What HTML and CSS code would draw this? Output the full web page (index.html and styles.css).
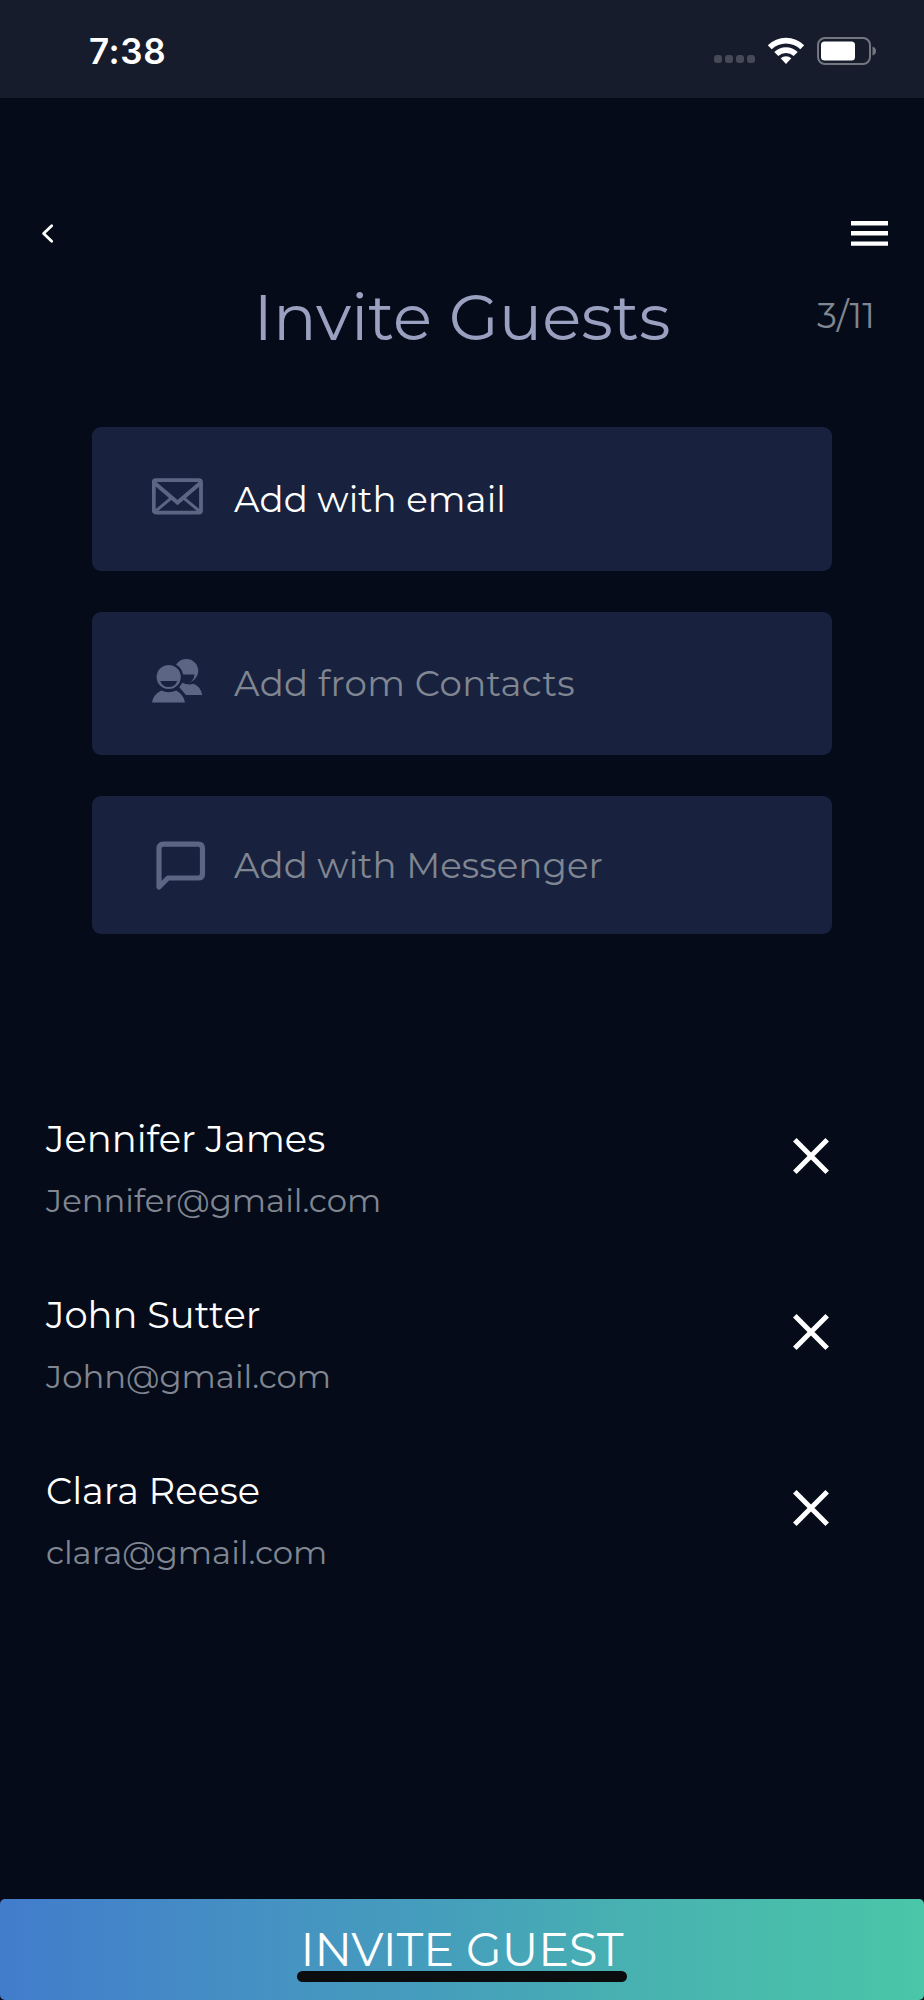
FILE: index.html
```
<!DOCTYPE html>
<html lang="en">
<head>
    <meta charset="UTF-8">
    <meta name="viewport" content="width=device-width, initial-scale=1.0">
    <title>Invite Guests</title>
    <link rel="stylesheet" href="styles.css">
</head>
<body>
    <div class="status-bar">
        <div class="time">7:38</div>
        <div class="status-icons">
            <div class="signal"><span></span><span></span><span></span><span></span></div>
            <svg class="wifi" width="38" height="28" viewBox="0 0 38 28" fill="#fff">
                <path d="M0.8 8.3A26 26 0 0 1 37.2 8.3L33.3 12.3A20.4 20.4 0 0 0 4.7 12.3Z"/>
                <path d="M7.3 15A16.8 16.8 0 0 1 30.7 15L26.7 19A11.2 11.2 0 0 0 11.3 19Z"/>
                <path d="M13.7 21.3A7.8 7.8 0 0 1 24.3 21.3L19 27Z"/>
            </svg>
            <svg class="battery" width="60" height="28" viewBox="0 0 60 28">
                <rect x="1" y="1" width="52" height="26" rx="7" fill="none" stroke="#73767f" stroke-width="2"/>
                <rect x="4" y="4.5" width="34" height="19" rx="3.5" fill="#fff"/>
                <path d="M55.5 9.5Q59 10.5 59 14T55.5 18.5Z" fill="#73767f"/>
            </svg>
        </div>
    </div>

    <header>
        <a href="#" class="back" aria-label="Back">
            <svg width="16" height="24" viewBox="0 0 16 24" fill="none" stroke="#fff" stroke-width="2.8" stroke-linecap="round" stroke-linejoin="round">
                <path d="M11.7 3.7L3.6 11.5L11.7 19.3"/>
            </svg>
        </a>
        <a href="#" class="menu" aria-label="Menu">
            <svg width="37" height="26" viewBox="0 0 37 26" stroke="#fff" stroke-width="4.4">
                <path d="M0 2.2H37M0 12.3H37M0 22.6H37"/>
            </svg>
        </a>
    </header>

    <main>
        <div class="heading">
            <h1>Invite Guests</h1>
            <span class="count">3/11</span>
        </div>

        <div class="options">
            <a href="#" class="option option-email">
                <svg width="52" height="52" viewBox="0 0 52 52" fill="none" stroke="#5c6684">
                    <rect x="1.8" y="7.2" width="47.2" height="32.4" rx="2" stroke-width="3.8"/>
                    <path d="M2 9.5L25.5 29.5L49 9.5" stroke-width="4"/>
                    <path d="M2.5 39L19.5 24.8M48.5 39L31.5 24.8" stroke-width="3"/>
                </svg>
                <span class="label">Add with email</span>
            </a>
            <a href="#" class="option option-contacts">
                <svg width="52" height="52" viewBox="0 4 52 52">
                    <!-- back person -->
                    <circle cx="34.3" cy="16.8" r="11.9" fill="#5c6684"/>
                    <path d="M25 20.5H42.5A8.3 8.3 0 0 1 25 20.5Z" fill="#18223e"/>
                    <path d="M27 33L30 28.4Q35.5 31.5 41.5 29.8Q48.5 32.5 50.3 41H34Z" fill="#5c6684"/>
                    <!-- front person -->
                    <circle cx="16.7" cy="23" r="14.6" fill="#18223e"/>
                    <circle cx="16.7" cy="23" r="12.1" fill="#5c6684"/>
                    <path d="M8.2 27H25.2A9 9 0 0 1 8.2 27Z" fill="#18223e"/>
                    <path d="M0 48.5Q1.4 40.5 9.2 36.5Q16.7 39.8 24.2 36.5Q31.5 40.5 33 48.5Z" fill="#5c6684"/>
                </svg>
                <span class="label">Add from Contacts</span>
            </a>
            <a href="#" class="option option-messenger">
                <svg width="54" height="52" viewBox="0 0 54 52" fill="none" stroke="#5c6684" stroke-width="5.2" stroke-linejoin="round">
                    <path d="M7 48V9.5Q7 5.2 11.3 5.2H46.2Q50.5 5.2 50.5 9.5V34.7Q50.5 39 46.2 39H16L7 48Z"/>
                </svg>
                <span class="label">Add with Messenger</span>
            </a>
        </div>

        <ul class="guests">
            <li>
                <div>
                    <p class="name">Jennifer James</p>
                    <p class="email">Jennifer@gmail.com</p>
                </div>
                <button class="remove" aria-label="Remove">
                    <svg width="36" height="36" viewBox="0 0 36 36" stroke="#fff" stroke-width="5"><path d="M1.8 1.8L34.2 34.2M34.2 1.8L1.8 34.2"/></svg>
                </button>
            </li>
            <li>
                <div>
                    <p class="name">John Sutter</p>
                    <p class="email">John@gmail.com</p>
                </div>
                <button class="remove" aria-label="Remove">
                    <svg width="36" height="36" viewBox="0 0 36 36" stroke="#fff" stroke-width="5"><path d="M1.8 1.8L34.2 34.2M34.2 1.8L1.8 34.2"/></svg>
                </button>
            </li>
            <li>
                <div>
                    <p class="name">Clara Reese</p>
                    <p class="email">clara@gmail.com</p>
                </div>
                <button class="remove" aria-label="Remove">
                    <svg width="36" height="36" viewBox="0 0 36 36" stroke="#fff" stroke-width="5"><path d="M1.8 1.8L34.2 34.2M34.2 1.8L1.8 34.2"/></svg>
                </button>
            </li>
        </ul>
    </main>

    <button class="invite">
        <span>INVITE GUEST</span>
        <i class="home-indicator"></i>
    </button>
</body>
</html>
```
FILE: styles.css
```
:root {
    --background-color: #050b18;
    --status-color: #171c2d;
    --card-color: #18223e;
    --title-color: #9aa1c0;
    --muted-color: #808692;
}

* {
    margin: 0;
    padding: 0;
    box-sizing: border-box;
}

body {
    font-family: Montserrat, Inter, sans-serif;
    font-weight: 400;
    background-color: var(--background-color);
    color: white;
    display: flex;
    flex-direction: column;
    height: 2000px;
    overflow: hidden;
}

a {
    color: inherit;
    text-decoration: none;
}

button {
    border: none;
    background: none;
    color: inherit;
    font: inherit;
    cursor: pointer;
}

svg {
    display: block;
    flex: none;
}

.status-bar {
    height: 98px;
    background-color: var(--status-color);
    display: flex;
    justify-content: space-between;
    align-items: center;
    padding: 3px 48px 0 89px;
}

.time {
    font-family: Inter, sans-serif;
    font-size: 35px;
    font-weight: 600;
    line-height: 40px;
    letter-spacing: 0.6px;
}

.status-icons {
    display: flex;
    align-items: center;
}

.signal {
    display: flex;
    gap: 3px;
    padding-top: 17px;
    margin-right: 12px;
}

.signal span {
    width: 8px;
    height: 8px;
    border-radius: 3px;
    background-color: #464a57;
}

.wifi {
    margin-right: 12px;
}

.battery {
    margin-right: -1px;
}

header {
    height: 44px;
    margin-top: 114px;
    padding: 0 36px 0 40px;
    display: flex;
    justify-content: space-between;
    align-items: center;
}

main {
    flex: 1;
}

.heading {
    height: 80px;
    margin-top: 21px;
    padding: 0 49px;
    display: grid;
    grid-template-columns: 1fr auto 1fr;
    align-items: center;
}

h1 {
    grid-column: 2;
    font-size: 64.6px;
    font-weight: 400;
    line-height: 80px;
    color: var(--title-color);
    white-space: nowrap;
}

.count {
    justify-self: end;
    font-size: 35.2px;
    line-height: 78px;
    margin-bottom: 2px;
    color: var(--muted-color);
}

.options {
    margin: 70px 92px 0;
    display: flex;
    flex-direction: column;
    gap: 41px;
}

.option {
    height: 144px;
    border-radius: 9px;
    background-color: var(--card-color);
    display: flex;
    align-items: center;
    gap: 30px;
    padding-left: 60px;
}

.option-contacts {
    height: 143px;
}

.option-messenger {
    height: 138px;
    gap: 28px;
}

.label {
    font-size: 35.6px;
    letter-spacing: 0.1px;
    line-height: 44px;
    padding-top: 1px;
    white-space: nowrap;
}

.option-contacts .label,
.option-messenger .label {
    color: var(--muted-color);
}

.option-contacts .label {
    letter-spacing: 0.3px;
}

.guests {
    list-style-type: none;
    margin-top: 181px;
    padding: 0 95px 0 46px;
}

.guests li {
    height: 176px;
    display: flex;
    justify-content: space-between;
    align-items: flex-start;
}

.name {
    font-size: 36.9px;
    line-height: 48px;
    margin-bottom: 17px;
}

.email {
    font-size: 32.3px;
    line-height: 42px;
    color: var(--muted-color);
}

.remove {
    margin-top: 23px;
}

.invite {
    height: 101px;
    border-radius: 5px;
    background: linear-gradient(90deg, #427ccc, #4591c3 28%, #45a0bb 50%, #48b3b0 70%, #4ac6a8);
    display: flex;
    flex-direction: column;
    align-items: center;
    padding-top: 27px;
}

.invite span {
    font-size: 46.1px;
    line-height: 48px;
    white-space: nowrap;
}

.home-indicator {
    flex: none;
    width: 330px;
    height: 11px;
    margin-top: -3px;
    border-radius: 6px;
    background-color: #0b0c0d;
}
```
